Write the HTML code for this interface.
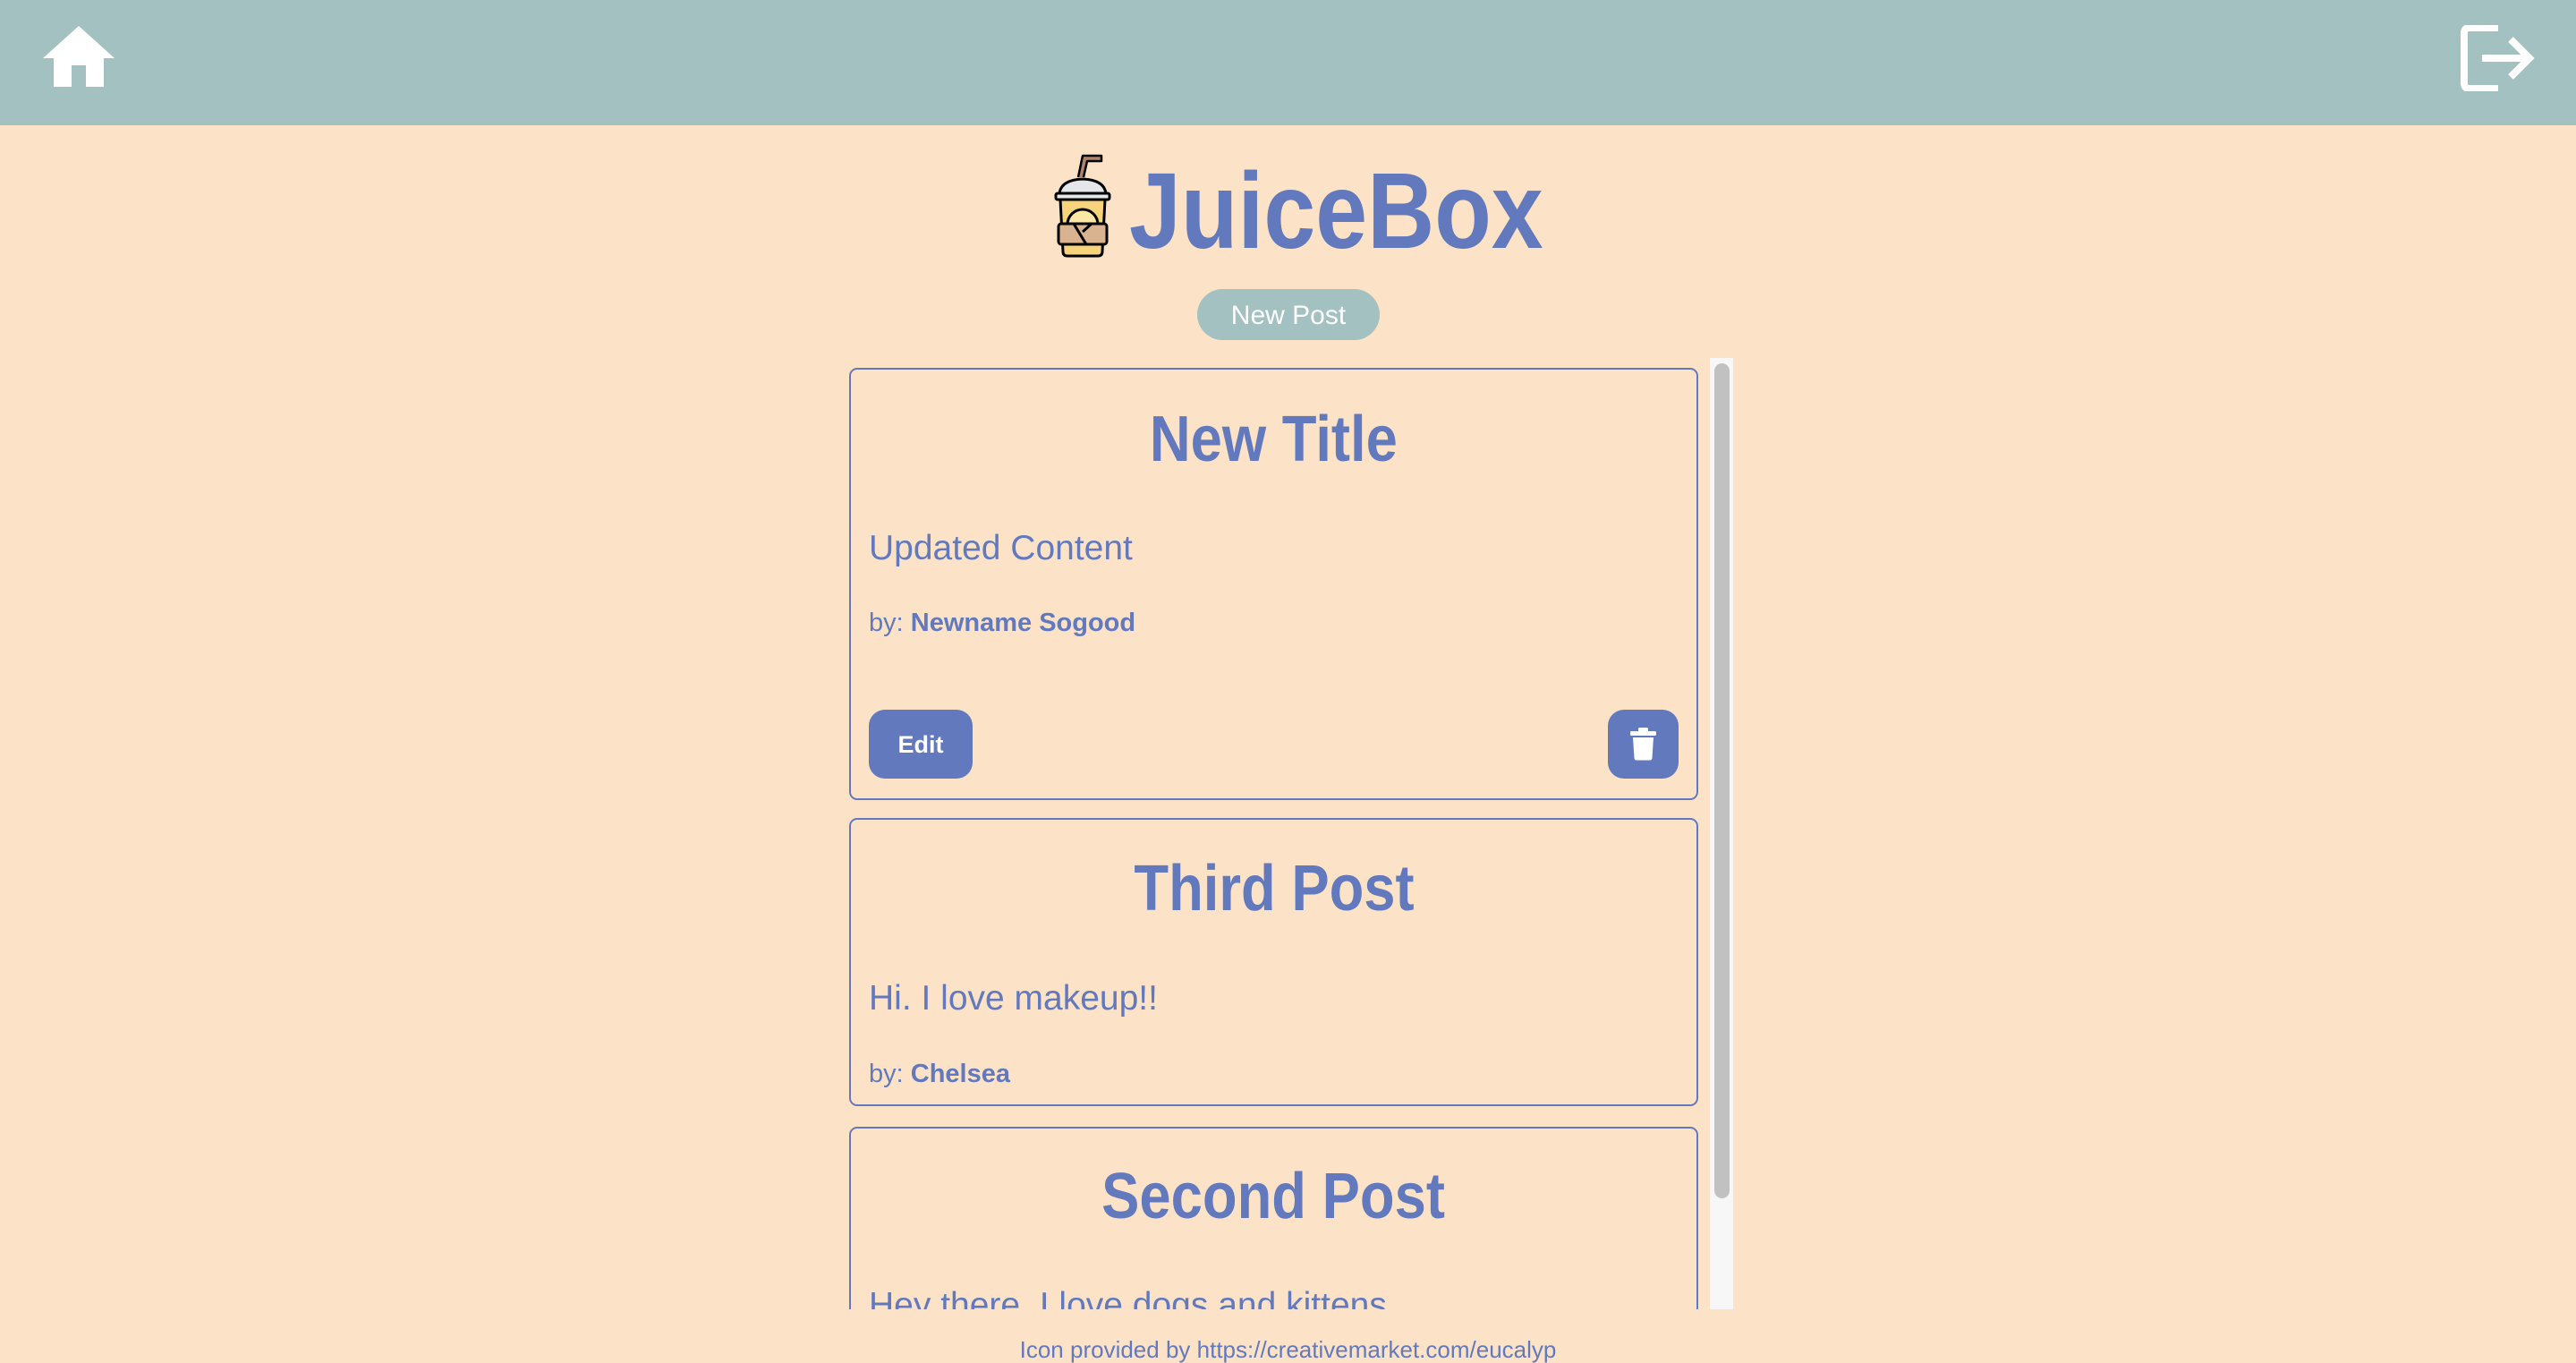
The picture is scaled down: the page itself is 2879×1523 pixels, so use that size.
<!DOCTYPE html>
<html><head><meta charset="utf-8"><style>
*{margin:0;padding:0;box-sizing:border-box}
html,body{width:2879px;height:1523px;overflow:hidden;background:#fce3c7;font-family:"Liberation Sans",sans-serif;color:#6279bd}
.abs{position:absolute;white-space:nowrap}
#hdr{position:absolute;left:0;top:0;width:2879px;height:140px;background:#a3c1c0}
.t{position:absolute;left:0;width:949px;text-align:center;font-weight:bold;font-size:72px;line-height:72px}
.t span{display:inline-block;transform:scaleX(0.88)}
.c{position:absolute;left:22px;font-size:39px;line-height:39px}
.b{position:absolute;left:22px;font-size:29px;line-height:29px}
.card{position:absolute;left:0;width:949px;border:2px solid #6279bd;border-radius:9px}
</style></head><body>
<div id="hdr"></div>
<svg class="abs" style="left:48px;top:29px" width="80" height="70" viewBox="0 0 80 70"><path d="M40 0 L80 36 L68 36 L68 68 L48 68 L48 44 L32 44 L32 68 L12 68 L12 36 L0 36 Z" fill="#fff"/></svg>
<svg class="abs" style="left:2750px;top:28px" width="84" height="74" viewBox="0 0 84 74"><path d="M42 3 H10 Q4 3 4 9 V65 Q4 71 10 71 H42" fill="none" stroke="#fff" stroke-width="8"/><path d="M24 37 H78 M56 16 L77 37 L56 58" fill="none" stroke="#fff" stroke-width="8"/></svg>

<svg class="abs" style="left:1170px;top:165px" width="80" height="125" viewBox="0 0 80 125">
<path d="M35 33 L40 9 L61 9 L61 15 L45 15 L41 33" fill="#b0846a" stroke="#000" stroke-width="2.5" stroke-linejoin="round"/>
<path d="M14 51 Q16 36 40 35 Q64 36 66 51 Z" fill="#e5e6ea" stroke="#000" stroke-width="3"/>
<rect x="10" y="51" width="60" height="7" rx="2" fill="#e5e6ea" stroke="#000" stroke-width="3"/>
<path d="M15 58 L65 58 L62 116 Q62 121 57 121 L23 121 Q18 121 18 116 Z" fill="#f7d47c" stroke="#000" stroke-width="3"/>
<path d="M23 86 A17 17 0 0 1 57 86" fill="#fbe7a6" stroke="#000" stroke-width="3"/>
<rect x="13" y="85" width="54" height="23" rx="3" fill="#d9b38f" stroke="#000" stroke-width="3"/>
<path d="M30 85 L44 108 M40 94 L50 85" stroke="#000" stroke-width="3" fill="none"/>
</svg>
<div class="abs" style="left:1262px;top:175px;font-size:121px;line-height:121px;font-weight:bold;transform:scaleX(0.86);transform-origin:left top">JuiceBox</div>

<div class="abs" style="left:1338px;top:323px;width:204px;height:57px;border-radius:29px;background:#a3c1c0;color:#fff;font-size:30px;line-height:59px;text-align:center">New Post</div>

<div class="abs" style="left:949px;top:400px;width:988px;height:1063px;overflow:hidden">
  <div class="abs" style="left:962px;top:0;width:26px;height:1063px;background:#f7f7f7"></div>
  <div class="abs" style="left:967px;top:6px;width:17px;height:933px;background:#c1c1c1;border-radius:9px"></div>

  <div class="card" style="top:11px;height:483px"></div>
  <div class="t" style="top:55px"><span>New Title</span></div>
  <div class="c" style="top:193px">Updated Content</div>
  <div class="b" style="top:282px">by: <b>Newname Sogood</b></div>
  <div class="abs" style="left:22px;top:393px;width:116px;height:77px;border-radius:18px;background:#6279bd;color:#fff;font-weight:bold;font-size:27px;line-height:79px;text-align:center">Edit</div>
  <div class="abs" style="left:848px;top:393px;width:79px;height:77px;border-radius:18px;background:#6279bd">
    <svg class="abs" style="left:24px;top:20px" width="31" height="37" viewBox="0 0 31 37"><rect x="10" y="0" width="11" height="5" rx="1.5" fill="#fff"/><rect x="1" y="4" width="29" height="5" rx="1.5" fill="#fff"/><path d="M4 11 H27 L25.5 34 Q25.3 36.5 23 36.5 H8 Q5.7 36.5 5.5 34 Z" fill="#fff"/></svg>
  </div>

  <div class="card" style="top:514px;height:322px"></div>
  <div class="t" style="top:557px"><span>Third Post</span></div>
  <div class="c" style="top:696px">Hi. I love makeup!!</div>
  <div class="b" style="top:786px">by: <b>Chelsea</b></div>

  <div class="card" style="top:859px;height:400px"></div>
  <div class="t" style="top:901px"><span>Second Post</span></div>
  <div class="c" style="top:1039px">Hey there. I love dogs and kittens</div>
</div>

<div class="abs" style="left:0;width:2879px;top:1495px;text-align:center;font-size:26px;line-height:26px;height:26px">Icon provided by https://creativemarket.com/eucalyp</div>
</body></html>
